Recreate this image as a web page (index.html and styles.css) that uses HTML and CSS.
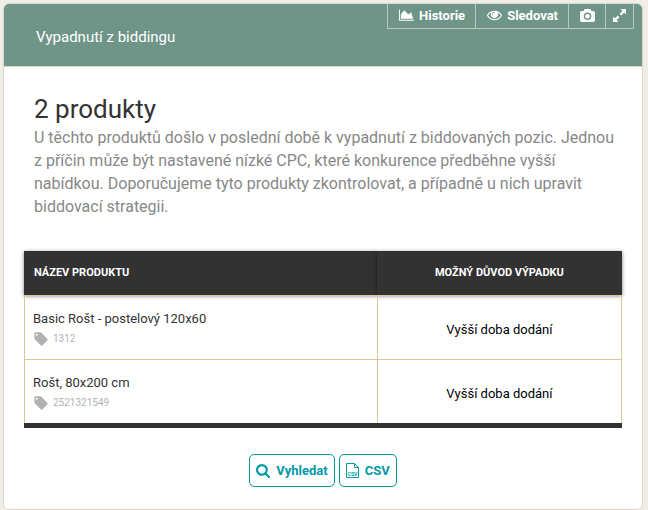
FILE: index.html
```html
<!DOCTYPE html>
<html lang="cs">
<head>
    <meta charset="UTF-8">
    <meta name="viewport" content="width=device-width, initial-scale=1.0">
    <title>Vypadnutí z biddingu</title>
    <link rel="stylesheet" href="styles.css">
</head>
<body>

    <div class="card">
        <div class="card-header">
            <h2 class="card-title">Vypadnutí z biddingu</h2>
            <div class="toolbar">
                <button type="button" class="tool">
                    <svg width="15" height="13" viewBox="0 128 2048 1664" fill="currentColor" aria-hidden="true"><path d="M2048 1536v128h-2048v-1536h128v1408h1920zm-384-1024l256 896h-1664v-576l448-576 576 576z"/></svg>
                    Historie
                </button>
                <button type="button" class="tool">
                    <svg width="15" height="15" viewBox="0 64 1792 1792" fill="currentColor" aria-hidden="true"><path d="M1664 960q-152-236-381-353 61 104 61 225 0 185-131.500 316.500t-316.500 131.500-316.500-131.500-131.500-316.500q0-121 61-225-229 117-381 353 133 205 333.500 326.500t434.500 121.500 434.500-121.500 333.500-326.500zm-720-384q0-20-14-34t-34-14q-125 0-214.500 89.500t-89.500 214.500q0 20 14 34t34 14 34-14 14-34q0-86 61-147t147-61q20 0 34-14t14-34zm848 384q0 34-20 69-140 230-376.500 368.500t-499.500 138.500-499.500-139-376.500-368q-20-35-20-69t20-69q140-229 376.500-368t499.500-139 499.500 139 376.500 368q20 35 20 69z"/></svg>
                    Sledovat
                </button>
                <button type="button" class="tool" aria-label="Snímek">
                    <svg width="15" height="13" viewBox="0 0 15 13" aria-hidden="true"><path fill="currentColor" fill-rule="evenodd" d="M5 0h5q.6 0 .8.600l.5 1.400h1.900q1.800 0 1.800 1.800v7.400q0 1.800-1.800 1.800H1.800Q0 13 0 11.200V3.800Q0 2 1.800 2h1.900l.5-1.400Q4.400 0 5 0zM7.500 3.500a3.800 3.800 0 1 0 0 7.600 3.800 3.800 0 0 0 0-7.600zM7.500 4.900a2.400 2.400 0 1 1 0 4.800 2.400 2.400 0 0 1 0-4.800z"/></svg>
                </button>
                <button type="button" class="tool tool-expand" aria-label="Zvětšit">
                    <svg width="13" height="13" viewBox="0 0 13 13" fill="currentColor" aria-hidden="true"><path d="M7.500 0H13v5.500l-1.900-1.900-2.800 2.800-1.700-1.700 2.800-2.800zM5.500 13H0V7.500l1.900 1.900 2.800-2.800 1.700 1.700-2.800 2.800z"/></svg>
                </button>
            </div>
        </div>

        <div class="card-body">
            <div class="intro">
                <h1>2 produkty</h1>
                <p>U těchto produktů došlo v poslední době k vypadnutí z biddovaných pozic. Jednou z příčin může být nastavené nízké CPC, které konkurence předběhne vyšší nabídkou. Doporučujeme tyto produkty zkontrolovat, a případně u nich upravit biddovací strategii.</p>
            </div>

            <table class="products">
                <thead>
                    <tr>
                        <th class="col-name">Název produktu</th>
                        <th class="col-reason">Možný důvod výpadku</th>
                    </tr>
                </thead>
                <tbody>
                    <tr>
                        <td class="col-name">
                            <div class="name">Basic Rošt - postelový 120x60</div>
                            <div class="code">
                                <svg width="16" height="16" viewBox="0 0 24 24" fill="currentColor" aria-hidden="true"><path d="M21.410 11.580l-9-9C12.050 2.220 11.550 2 11 2H4c-1.100 0-2 .9-2 2v7c0 .55.22 1.050.59 1.420l9 9c.36.36.86.58 1.410.58.55 0 1.050-.22 1.410-.59l7-7c.37-.36.59-.86.59-1.410 0-.55-.23-1.060-.59-1.420zM5.500 7C4.670 7 4 6.330 4 5.500S4.670 4 5.500 4 7 4.670 7 5.500 6.330 7 5.500 7z"/></svg>
                                1312
                            </div>
                        </td>
                        <td class="col-reason">Vyšší doba dodání</td>
                    </tr>
                    <tr>
                        <td class="col-name">
                            <div class="name">Rošt, 80x200 cm</div>
                            <div class="code">
                                <svg width="16" height="16" viewBox="0 0 24 24" fill="currentColor" aria-hidden="true"><path d="M21.410 11.580l-9-9C12.050 2.220 11.550 2 11 2H4c-1.100 0-2 .9-2 2v7c0 .55.22 1.050.59 1.420l9 9c.36.36.86.58 1.410.58.55 0 1.050-.22 1.410-.59l7-7c.37-.36.59-.86.59-1.410 0-.55-.23-1.060-.59-1.420zM5.500 7C4.670 7 4 6.330 4 5.500S4.670 4 5.500 4 7 4.670 7 5.500 6.330 7 5.500 7z"/></svg>
                                2521321549
                            </div>
                        </td>
                        <td class="col-reason">Vyšší doba dodání</td>
                    </tr>
                </tbody>
            </table>

            <div class="actions">
                <button type="button" class="button">
                    <svg width="14" height="14" viewBox="64 128 1664 1664" fill="currentColor" aria-hidden="true"><path d="M1216 832q0-185-131.500-316.500t-316.500-131.500-316.500 131.500-131.500 316.500 131.500 316.500 316.500 131.500 316.500-131.500 131.500-316.500zm512 832q0 52-38 90t-90 38q-54 0-90-38l-343-342q-179 124-399 124-143 0-273.500-55.500t-225-150-150-225-55.500-273.500 55.500-273.500 150-225 225-150 273.500-55.500 273.500 55.500 225 150 150 225 55.500 273.500q0 220-124 399l343 343q37 37 37 90z"/></svg>
                    Vyhledat
                </button>
                <button type="button" class="button">
                    <svg width="13" height="15" viewBox="0 0 13 15" aria-hidden="true">
                        <path fill="none" stroke="currentColor" d="M.5.5h8l4 4v10H.5zM8.500.5v4h4"/>
                        <text class="icon-text" x="6.500" y="13" text-anchor="middle">CSV</text>
                    </svg>
                    CSV
                </button>
            </div>
        </div>
    </div>

</body>
</html>
```
FILE: styles.css
```css
* {
    box-sizing: border-box;
}

body {
    font-family: Roboto, "Liberation Sans", sans-serif;
    margin: 0;
    padding: 3px 5px 0 3px;
    background-color: #f0ede6;
    color: #333;
}

h1, h2, p {
    margin: 0;
    font-weight: normal;
}

button {
    font-family: inherit;
    font-size: 13px;
    font-weight: bold;
    cursor: pointer;
}

svg {
    flex: none;
}

.card {
    background-color: #fff;
    border: 1px solid #d9d6c8;
    border-radius: 6px;
    overflow: hidden;
}

.card-header {
    display: flex;
    justify-content: space-between;
    align-items: flex-start;
    min-height: 63px;
    padding: 0 8px 0 32px;
    background-color: #6f9588;
    border-bottom: 1px solid #d9d6c8;
    color: #fff;
}

.card-title {
    font-size: 15px;
    line-height: 20px;
    padding-top: 23px;
}

.toolbar {
    display: flex;
    border: 1px solid #b5c9c2;
    border-top: none;
}

.tool {
    display: flex;
    align-items: center;
    gap: 5px;
    height: 24px;
    padding: 0 10px 2px 11px;
    border: none;
    border-right: 1px solid #b5c9c2;
    background: none;
    color: #fff;
}

.tool:last-child {
    border-right: none;
}

.tool-expand {
    padding: 0 7px 2px;
}

.card-body {
    padding: 26px 20px 22px;
}

.intro {
    padding-left: 10px;
}

.intro h1 {
    font-size: 26px;
    line-height: 33px;
}

.intro p {
    font-size: 16px;
    line-height: 23px;
    color: #888;
}

.products {
    width: 100%;
    margin-top: 33px;
    border-collapse: separate;
    border-spacing: 0;
    border-bottom: 5px solid #323232;
    font-size: 13px;
}

.products th {
    height: 44px;
    padding: 0 10px 2px;
    background-color: #323232;
    box-shadow: 0 1px 4px rgba(0, 0, 0, 0.5);
    color: #fff;
    font-size: 11px;
    text-transform: uppercase;
}

.products td {
    height: 64px;
    padding: 3px 8px 0;
    border-top: 1px solid #d5c997;
    border-left: 1px solid #d5c997;
}

.products td:last-child {
    border-right: 1px solid #d5c997;
}

.products .col-name {
    text-align: left;
}

.products .col-reason {
    width: 41%;
    text-align: center;
}

.products td.col-reason {
    color: #000;
}

.name {
    line-height: 20px;
}

.code {
    display: flex;
    align-items: center;
    gap: 4px;
    line-height: 20px;
    font-size: 10px;
    color: #b2b2b2;
}

.actions {
    display: flex;
    justify-content: center;
    gap: 4px;
    margin-top: 26px;
}

.button {
    display: flex;
    align-items: center;
    gap: 6px;
    height: 33px;
    padding: 0 6px;
    border: 1px solid #009aa6;
    border-radius: 5px;
    background-color: #fff;
    color: #009aa6;
}

.icon-text {
    fill: currentColor;
    font-size: 5px;
    font-weight: bold;
}
```
